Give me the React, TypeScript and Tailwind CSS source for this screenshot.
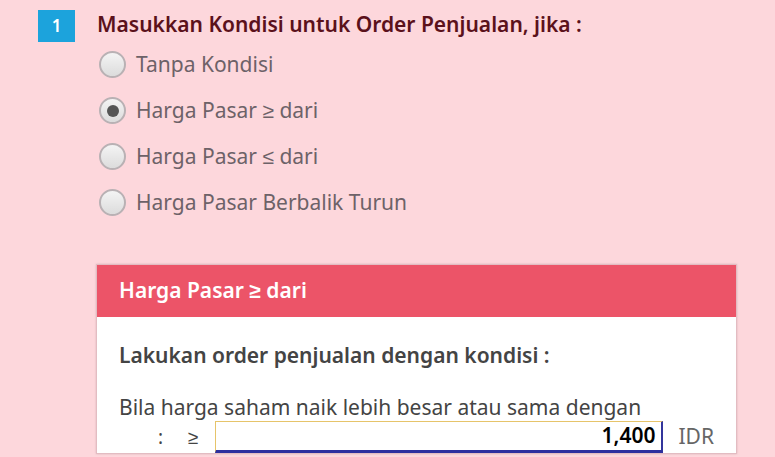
const options = [
  { label: 'Tanpa Kondisi', checked: false },
  { label: 'Harga Pasar ≥ dari', checked: true },
  { label: 'Harga Pasar ≤ dari', checked: false },
  { label: 'Harga Pasar Berbalik Turun', checked: false },
]

function Radio({ checked }: { checked: boolean }) {
  return (
    <span className="flex h-[27px] w-[27px] shrink-0 items-center justify-center rounded-full border-2 border-[#b9b1b4] bg-gradient-to-b from-[#f4f4f4] to-[#dcdcdc]">
      {checked && <span className="h-[12px] w-[12px] rounded-full bg-[#555]" />}
    </span>
  )
}

export default function App() {
  return (
    <div className="h-[457px] w-[775px] overflow-hidden bg-[#fdd7dc] font-['Noto_Sans',sans-serif]">
      <div className="flex items-start gap-[22px] pl-[38px] pt-[10px]">
        <span className="flex h-[32px] w-[37px] items-center justify-center bg-[#1ca3dc] text-[17px] font-semibold text-white">
          1
        </span>
        <div className="flex flex-col">
          <h1 className="text-[21px] leading-[28px] font-semibold text-[#5b111b]">
            Masukkan Kondisi untuk Order Penjualan, jika :
          </h1>
          <div className="mt-[13px] flex flex-col gap-[19px]">
            {options.map((o) => (
              <label key={o.label} className="flex items-center gap-[10px] pl-[2px] text-[21px] leading-[27px] text-[#6d6268]">
                <Radio checked={o.checked} />
                {o.label}
              </label>
            ))}
          </div>
        </div>
      </div>

      <div className="ml-[96px] mt-[48px] w-[641px] border border-[#e3bcc2] bg-white shadow-[0_0_2px_rgba(0,0,0,0.15)]">
        <div className="flex h-[52px] items-center bg-[#ec5468] px-[22px] text-[21px] font-semibold text-white">
          Harga Pasar ≥ dari
        </div>
        <div className="px-[22px] pt-[25px]">
          <p className="text-[21px] leading-[26px] font-semibold text-[#444]">
            Lakukan order penjualan dengan kondisi :
          </p>
          <p className="mt-[26px] text-[21px] leading-[26px] text-[#444]">
            Bila harga saham naik lebih besar atau sama dengan
          </p>
          <div className="mt-[1px] flex items-center text-[19px] text-[#444]">
            <span className="ml-[39px] w-[30px]">:</span>
            <span className="w-[27px]">≥</span>
            <div className="flex h-[32px] w-[452px] items-center justify-end border border-[#e6c46a] border-r-2 border-r-[#33359c] border-b-[3px] border-b-[#2e2f9e] px-[6px] text-[21px] font-semibold text-black">
              1,400
            </div>
            <span className="ml-[15px] text-[21px] text-[#666]">IDR</span>
          </div>
        </div>
      </div>
    </div>
  )
}
